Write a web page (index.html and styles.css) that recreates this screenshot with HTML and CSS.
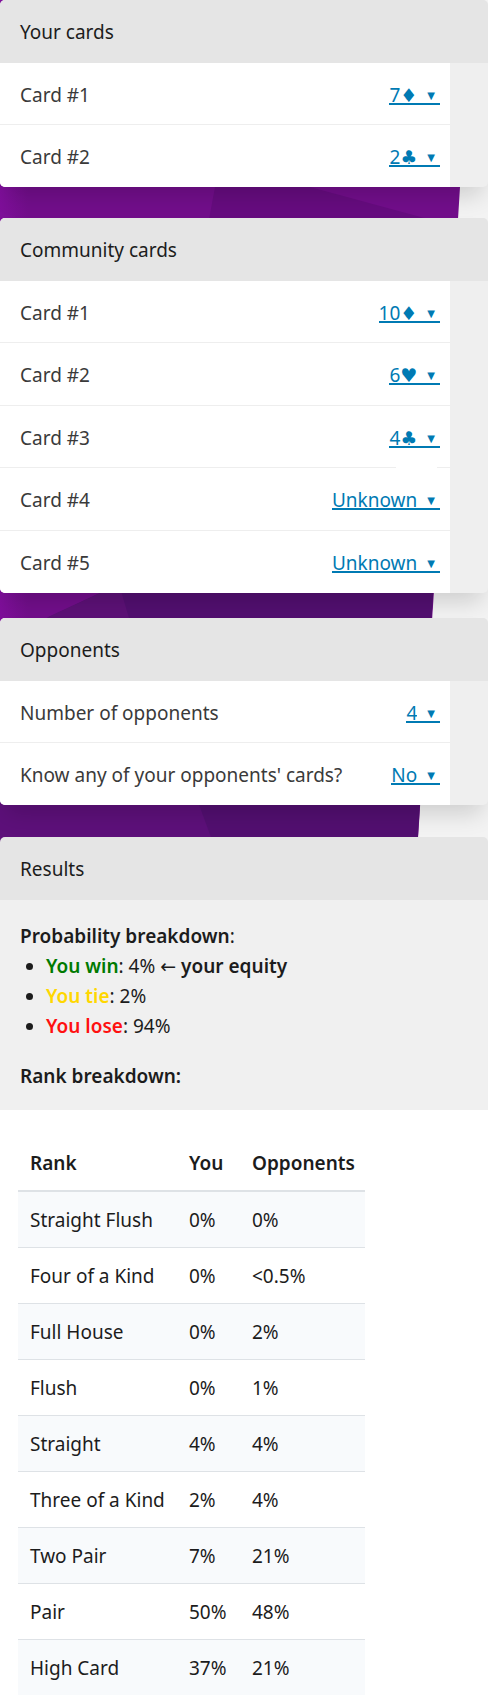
FILE: index.html
```html
<!DOCTYPE html>
<html lang="en">
<head>
<meta charset="utf-8">
<meta name="viewport" content="width=device-width, initial-scale=1">
<title>Poker odds</title>
<link rel="stylesheet" href="styles.css">
</head>
<body>
<svg class="backdrop" viewBox="0 0 488 900" preserveAspectRatio="none" aria-hidden="true">
  <defs>
    <linearGradient id="edge" x1="0" x2="1" y1="0" y2="0">
      <stop offset="0" stop-color="#8a10a8" stop-opacity=".5"/>
      <stop offset="1" stop-color="#8a10a8" stop-opacity="0"/>
    </linearGradient>
  </defs>
  <path fill="#720e8b" d="M0 0H472L459 203L414 900H0Z"/>
  <path fill="#660c7f" d="M220 160L208 225H450L310 187L222 160Z"/>
  <path fill="#520f70" d="M0 640L100 593V500H439L414 900H0Z"/>
  <path fill="#5d1177" d="M48 617L100 593V560H112L129 618H48Z"/>
  <path fill="#5d107a" d="M0 780H190L212 840V900H0Z"/>
  <rect fill="url(#edge)" width="28" height="640"/>
</svg>
<main class="page">
  <section class="card">
    <h2 class="card-title">Your cards</h2>
    <div class="rows">
      <div class="row"><label class="name" for="own1">Card #1</label><span class="picker"><select id="own1"><option>7♦</option></select><span class="arrow">▼</span></span></div>
      <div class="row"><label class="name" for="own2">Card #2</label><span class="picker"><select id="own2"><option>2♣</option></select><span class="arrow">▼</span></span></div>
    </div>
  </section>
  <section class="card card-community">
    <h2 class="card-title">Community cards</h2>
    <div class="rows">
      <div class="row"><label class="name" for="com1">Card #1</label><span class="picker"><select id="com1"><option>10♦</option></select><span class="arrow">▼</span></span></div>
      <div class="row"><label class="name" for="com2">Card #2</label><span class="picker"><select id="com2"><option>6♥</option></select><span class="arrow">▼</span></span></div>
      <div class="row row-split"><label class="name" for="com3">Card #3</label><span class="picker"><select id="com3"><option>4♣</option></select><span class="arrow">▼</span></span></div>
      <div class="row"><label class="name" for="com4">Card #4</label><span class="picker"><select id="com4"><option>Unknown</option></select><span class="arrow">▼</span></span></div>
      <div class="row"><label class="name" for="com5">Card #5</label><span class="picker"><select id="com5"><option>Unknown</option></select><span class="arrow">▼</span></span></div>
    </div>
  </section>
  <section class="card card-opponents">
    <h2 class="card-title">Opponents</h2>
    <div class="rows">
      <div class="row"><label class="name" for="count">Number of opponents</label><span class="picker"><select id="count"><option>4</option></select><span class="arrow">▼</span></span></div>
      <div class="row"><label class="name" for="known">Know any of your opponents' cards?</label><span class="picker"><select id="known"><option>No</option></select><span class="arrow">▼</span></span></div>
    </div>
  </section>
  <section class="results">
    <h2 class="card-title">Results</h2>
    <div class="summary">
      <p><strong>Probability breakdown</strong>:</p>
      <ul>
        <li><strong class="win">You win</strong>: 4% ← <strong>your equity</strong></li>
        <li><strong class="tie">You tie</strong>: 2%</li>
        <li><strong class="lose">You lose</strong>: 94%</li>
      </ul>
      <p><strong>Rank breakdown:</strong></p>
    </div>
    <div class="ranks">
      <table>
        <thead><tr><th class="col-rank">Rank</th><th class="col-you">You</th><th class="col-opp">Opponents</th></tr></thead>
        <tbody>
          <tr><td>Straight Flush</td><td>0%</td><td>0%</td></tr>
          <tr><td>Four of a Kind</td><td>0%</td><td>&lt;0.5%</td></tr>
          <tr><td>Full House</td><td>0%</td><td>2%</td></tr>
          <tr><td>Flush</td><td>0%</td><td>1%</td></tr>
          <tr><td>Straight</td><td>4%</td><td>4%</td></tr>
          <tr><td>Three of a Kind</td><td>2%</td><td>4%</td></tr>
          <tr><td>Two Pair</td><td>7%</td><td>21%</td></tr>
          <tr><td>Pair</td><td>50%</td><td>48%</td></tr>
          <tr><td>High Card</td><td>37%</td><td>21%</td></tr>
        </tbody>
      </table>
    </div>
  </section>
</main>
</body>
</html>
```
FILE: styles.css
```css
* { box-sizing: border-box; }
body {
  margin: 0;
  background: #f3f3f3;
  color: #1c1c1c;
  font: 19px/30px "Segoe UI", "Noto Sans", "DejaVu Sans", sans-serif;
}
.backdrop {
  position: absolute;
  top: 0;
  left: 0;
  width: 100%;
  height: 900px;
  z-index: -1;
}
.card {
  margin-bottom: 31px;
  background: #efefef;
  border-radius: 5px;
  overflow: hidden;
  box-shadow: 0 14px 22px -6px rgba(0, 0, 0, .16);
}
.card-community { margin-bottom: 25px; }
.card-opponents { margin-bottom: 32px; }
.card-title {
  margin: 0;
  padding: 17px 20px 16px;
  background: #e5e5e5;
  font-size: 19px;
  font-weight: 400;
}
.rows {
  margin-right: 38px;
  background: #fff;
}
.row {
  display: flex;
  align-items: center;
  justify-content: space-between;
  padding: 17px 10px 15px 20px;
}
.row:not(:last-child) {
  background: linear-gradient(#eee, #eee) bottom / 100% 1px no-repeat;
}
.row:nth-child(even):not(:last-child) { padding-bottom: 16px; }
.row-split:not(:last-child) {
  background-image: linear-gradient(to left, #eee 13px, #fff 13px 54px, #eee 54px);
}
.name { color: #3a3a3a; }
.picker {
  display: flex;
  align-items: center;
  color: #007ab3;
  background: linear-gradient(#007ab3, #007ab3) 0 20px / 100% 2px no-repeat;
}
.picker select {
  appearance: none;
  field-sizing: content;
  margin: 0;
  padding: 0;
  border: 0;
  background: none;
  color: inherit;
  font: inherit;
  line-height: 24px;
}
.arrow {
  padding: 0 5px 0 10px;
  font-size: 10px;
  line-height: 24px;
}
.results .card-title { border-radius: 5px 5px 0 0; }
.summary {
  padding: 21px 20px 19px;
  background: #f0f0f0;
}
.summary p { margin: 0; }
.summary ul {
  margin: 0 0 20px;
  padding-left: 26px;
}
strong, th { font-weight: 600; }
.win { color: #007a00; }
.tie { color: #ffd700; }
.lose { color: #ff1010; }
.ranks {
  padding: 24px 18px 5px;
  background: #fff;
}
table { border-collapse: collapse; }
th, td {
  padding: 12px;
  text-align: left;
}
th {
  padding: 14px 10px 12px 12px;
  border-bottom: 2px solid #dee2e6;
}
td { padding: 13px 12px 12px; }
tbody tr + tr td { border-top: 1px solid #dee2e6; }
tbody tr:nth-child(odd) { background: #f8fafc; }
.col-rank { width: 159px; }
.col-you { width: 63px; }
.col-opp { width: 125px; }
```
